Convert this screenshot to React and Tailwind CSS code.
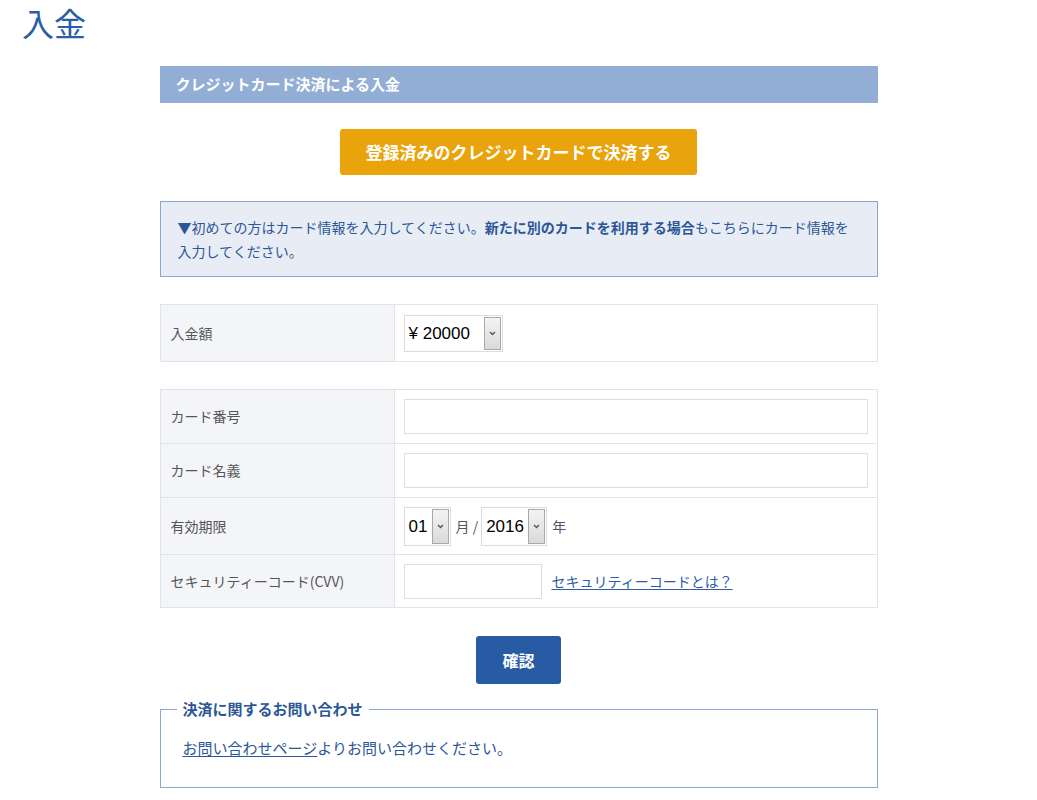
import React from 'react';

const jp = "font-['Meiryo','Noto_Sans_CJK_JP',sans-serif]";

function Chevron() {
  return (
    <svg width="7" height="5" viewBox="0 0 7 5" className="text-[#555]">
      <path d="M1 1 L3.5 3.5 L6 1" fill="none" stroke="currentColor" strokeWidth="1.4" />
    </svg>
  );
}

function FakeSelect({ value, className }) {
  return (
    <div className={`flex border border-[#dcdcdc] bg-white ${className}`}>
      <span className="flex flex-1 items-center pl-[4px] pt-[2px] font-['Liberation_Sans',sans-serif] text-[17px] text-black">{value}</span>
      <span className="my-[1px] mr-[1px] flex w-[17px] items-center justify-center border border-[#a8a8a8] bg-gradient-to-b from-[#f3f3f3] to-[#dadada]">
        <Chevron />
      </span>
    </div>
  );
}

function Row({ label, h, last, children }) {
  return (
    <div className={`flex ${h} ${last ? '' : 'border-b border-[#e3e3e3]'}`}>
      <div className="flex w-[234px] shrink-0 items-center border-r border-[#e3e3e3] bg-[#f4f5f9] pl-[10px] text-[14px] text-[#555]">
        {label}
      </div>
      <div className="flex flex-1 items-center px-[9px]">{children}</div>
    </div>
  );
}

export default function App() {
  return (
    <div className={`min-h-screen bg-white ${jp}`}>
      <h1 className="h-[44px] pl-[22px] pt-[2px] text-[32px] leading-[40px] text-[#2c5ea8]">入金</h1>

      <div className="mx-auto w-[718px] pb-[13px]">
        <div className="mt-[22px] flex h-[37px] items-center bg-[#93aed5] pl-[16px] text-[15px] font-bold text-white">
          クレジットカード決済による入金
        </div>

        <div className="mt-[26px] flex justify-center">
          <button className="h-[46px] w-[357px] rounded-[3px] bg-[#e9a30b] text-[17px] font-bold text-white">
            登録済みのクレジットカードで決済する
          </button>
        </div>

        <div className="mt-[26px] border border-[#8ba7d7] bg-[#e8edf5] px-[17px] py-[13px] text-[14px] leading-[24px] text-[#2c5797]">
          ▼初めての方はカード情報を入力してください。<span className="font-bold">新たに別のカードを利用する場合</span>もこちらにカード情報を入力してください。
        </div>

        <div className="mt-[27px] border border-[#e3e3e3]">
          <Row label="入金額" h="h-[56px]" last>
            <FakeSelect value="¥ 20000" className="h-[37px] w-[99px]" />
          </Row>
        </div>

        <div className="mt-[27px] border border-[#e3e3e3]">
          <Row label="カード番号" h="h-[54px]">
            <input className="h-[35px] w-full border border-[#dedede] bg-white outline-none" />
          </Row>
          <Row label="カード名義" h="h-[54px]">
            <input className="h-[35px] w-full border border-[#dedede] bg-white outline-none" />
          </Row>
          <Row label="有効期限" h="h-[57px]">
            <div className="flex items-center">
              <FakeSelect value="01" className="h-[39px] w-[47px]" />
              <span className="ml-[5px] mr-[3px] text-[14px] text-[#555]">月 /</span>
              <FakeSelect value="2016" className="h-[39px] w-[66px]" />
              <span className="ml-[5px] text-[14px] text-[#555]">年</span>
            </div>
          </Row>
          <Row label="セキュリティーコード(CVV)" h="h-[52px]" last>
            <input className="h-[35px] w-[138px] border border-[#dedede] bg-white outline-none" />
            <a href="#" className="ml-[10px] text-[14px] text-[#2c5ca8] underline underline-offset-2">
              セキュリティーコードとは？
            </a>
          </Row>
        </div>

        <div className="mt-[28px] flex justify-center">
          <button className="h-[48px] w-[85px] rounded-[3px] bg-[#275ca5] text-[16px] font-bold text-white">確認</button>
        </div>

        <fieldset className="mt-[15px] border border-[#8ba7d7] px-[16px] pb-[27px] pt-[17px]">
          <legend className="px-[6px] text-[15px] font-bold leading-[20px] text-[#2c5797]">決済に関するお問い合わせ</legend>
          <p className="pl-[6px] text-[15px] leading-[24px] text-[#2c5797]">
            <a href="#" className="underline underline-offset-2">お問い合わせページ</a>よりお問い合わせください。
          </p>
        </fieldset>
      </div>
    </div>
  );
}
